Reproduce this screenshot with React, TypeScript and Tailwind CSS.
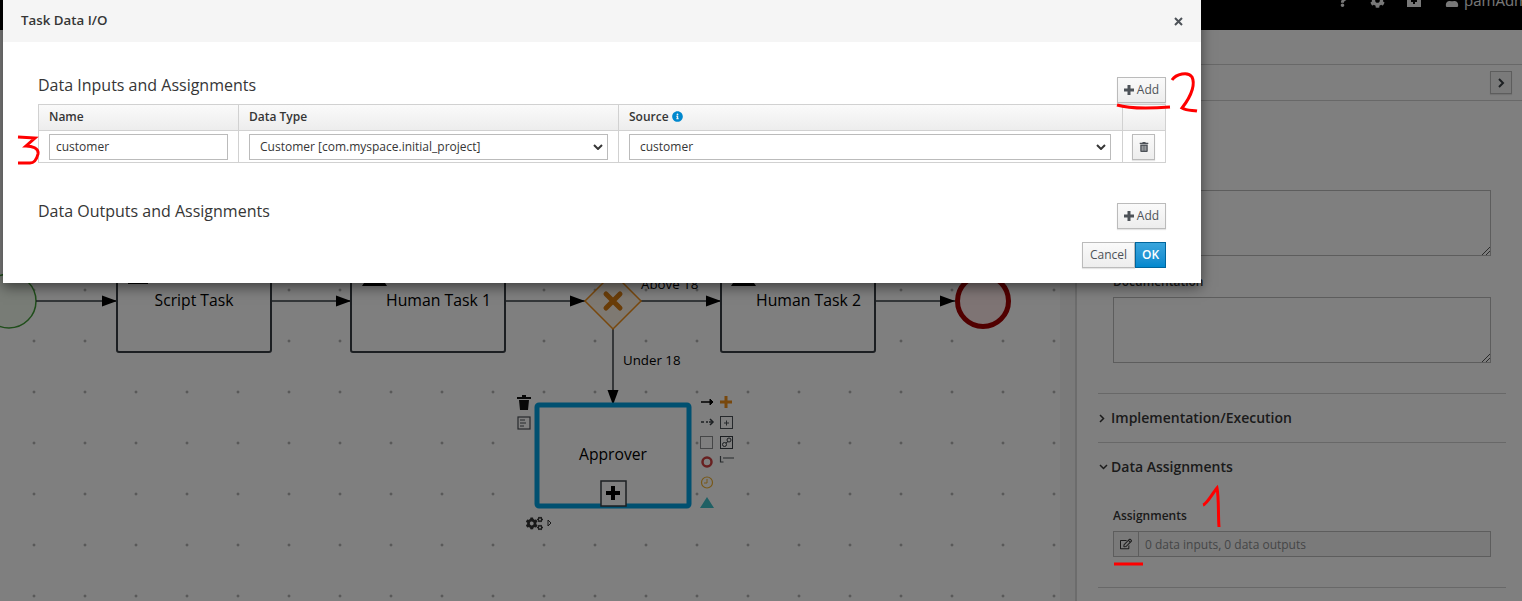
import { FaCog, FaCogs, FaInfoCircle, FaQuestion, FaRegEdit, FaTrashAlt, FaUser } from "react-icons/fa";

const font = "[font-family:'Open_Sans',sans-serif]";

function PlusIcon() {
  return (
    <svg width="10" height="10" viewBox="0 0 10 10" className="fill-[#4d5258]">
      <path d="M3.5 0h3v3.500H10v3H6.500V10h-3V6.500H0v-3h3.500z" />
    </svg>
  );
}

function AddButton() {
  return (
    <button className="flex items-center gap-[3px] h-[26px] w-[49px] justify-center border border-[#bbb] bg-gradient-to-b from-[#fafafa] to-[#ededed] text-xs text-[#4d5258] shadow-[0_1px_1px_rgba(0,0,0,0.1)]">
      <PlusIcon />
      Add
    </button>
  );
}

function Chevron() {
  return (
    <svg width="10" height="6" viewBox="0 0 10 6" className="absolute right-[4px] top-[9px] fill-none stroke-[#363636] stroke-2">
      <path d="M1 1l4 4 4-4" />
    </svg>
  );
}

function SelectBox({ value, width }: { value: string; width: string }) {
  return (
    <div className={`relative h-[26px] ${width} border border-[#bbb] bg-white pl-[10px] text-xs leading-[24px] text-[#363636]`}>
      {value}
      <Chevron />
    </div>
  );
}

function TaskDataModal() {
  return (
    <div className="absolute left-[3px] top-0 w-[1198px] h-[283px] bg-white shadow-[0_4px_12px_rgba(0,0,0,0.5)]">
      <div className="flex h-[42px] items-center justify-between bg-[#f5f5f5] pl-[18px] pr-[18px]">
        <span className="text-[13.3px] font-semibold text-[#363636]">Task Data I/O</span>
        <svg width="9" height="9" viewBox="0 0 9 9" className="stroke-[#4d5258] stroke-2">
          <path d="M1 1l7 7M8 1l-7 7" />
        </svg>
      </div>

      <div className="px-[35px]">
        <div className="flex h-[62px] w-[1128px] items-end justify-between">
          <span className="mb-[8px] text-base leading-[22px] text-[#363636]">Data Inputs and Assignments</span>
          <div className="mb-[1px]"><AddButton /></div>
        </div>

        <div className="w-[1128px] border border-[#d1d1d1] text-xs">
          <div className="flex h-[26px] border-b border-[#d1d1d1] bg-gradient-to-b from-[#fafafa] to-[#ededed] font-semibold text-[#363636]">
            <div className="w-[200px] border-r border-[#d1d1d1] pl-[10px] leading-[23px]">Name</div>
            <div className="w-[380px] border-r border-[#d1d1d1] pl-[10px] leading-[23px]">Data Type</div>
            <div className="flex w-[504px] items-center gap-[3px] border-r border-[#d1d1d1] pb-[2px] pl-[10px]">
              Source
              <FaInfoCircle size={11} className="text-[#0088ce]" />
            </div>
          </div>
          <div className="flex h-[31px]">
            <div className="flex w-[200px] items-center border-r border-[#d1d1d1] pl-[10px]">
              <div className="h-[26px] w-[179px] border border-[#bbb] bg-white pl-[6px] leading-[24px] text-[#363636]">customer</div>
            </div>
            <div className="flex w-[380px] items-center border-r border-[#d1d1d1] pl-[10px]">
              <SelectBox value="Customer [com.myspace.initial_project]" width="w-[359px]" />
            </div>
            <div className="flex w-[504px] items-center border-r border-[#d1d1d1] pl-[10px]">
              <SelectBox value="customer" width="w-[482px]" />
            </div>
            <div className="flex flex-1 items-center pl-[9px]">
              <button className="flex h-[26px] w-[23px] items-center justify-center border border-[#bbb] bg-gradient-to-b from-[#fafafa] to-[#ededed] text-[#4d5258] shadow-[0_1px_1px_rgba(0,0,0,0.1)]">
                <FaTrashAlt size={10} />
              </button>
            </div>
          </div>
        </div>

        <div className="mt-[28px] flex h-[40px] w-[1128px] items-center justify-between">
          <span className="text-base leading-[22px] text-[#363636]">Data Outputs and Assignments</span>
          <div className="mt-[9px]"><AddButton /></div>
        </div>

        <div className="mt-[11px] flex w-[1128px] justify-end">
          <button className="h-[26px] w-[53px] border border-[#bbb] bg-gradient-to-b from-[#fafafa] to-[#ededed] text-xs text-[#4d5258] shadow-[0_1px_1px_rgba(0,0,0,0.1)]">Cancel</button>
          <button className="h-[26px] w-[31px] border border-[#00659c] bg-gradient-to-b from-[#39a5dc] to-[#0088ce] text-xs font-semibold text-white">OK</button>
        </div>
      </div>
    </div>
  );
}

function Arrowhead({ x, y, down }: { x: number; y: number; down?: boolean }) {
  return down ? (
    <polygon points={`${x - 5.5},${y - 15} ${x + 5.5},${y - 15} ${x},${y}`} fill="#000" />
  ) : (
    <polygon points={`${x - 15},${y - 5.5} ${x - 15},${y + 5.5} ${x},${y}`} fill="#000" />
  );
}

function DiagramCanvas() {
  return (
    <div className="absolute inset-0 bg-white bg-[radial-gradient(circle,#8a8a8a_0.9px,transparent_1.4px)] bg-[size:51px_51px] bg-[position:8.5px_9.5px]">
      <svg width="1060" height="601" viewBox="0 0 1060 601" className="absolute left-0 top-0 fill-none">
        <circle cx="9" cy="301" r="27" fill="#f0f8ec" stroke="#3f9c35" strokeWidth="1.5" />
        <path d="M36 301H117M271 301H351M505 301H585M641 301H721M875 301H955" stroke="#393f44" strokeWidth="1.5" />
        <path d="M613 329V404" stroke="#393f44" strokeWidth="1.5" />
        <Arrowhead x={117} y={301} />
        <Arrowhead x={351} y={301} />
        <Arrowhead x={585} y={301} />
        <Arrowhead x={721} y={301} />
        <Arrowhead x={955} y={301} />
        <Arrowhead x={613} y={405} down />

        <rect x="117" y="240" width="154" height="112" rx="2" fill="#fff" stroke="#393f44" strokeWidth="2" />
        <rect x="351" y="240" width="154" height="112" rx="2" fill="#fff" stroke="#393f44" strokeWidth="2" />
        <rect x="721" y="240" width="154" height="112" rx="2" fill="#fff" stroke="#393f44" strokeWidth="2" />
        <path d="M128 284h20v-2h-20zM362 286h25l-4-6h-17zM731 286h25l-4-6h-17z" fill="#000" />

        <path d="M613 273l28 28-28 28-28-28z" fill="#fdf2e5" stroke="#f0901a" strokeWidth="1.5" />
        <path d="M606 294l14 14M620 294l-14 14" stroke="#d47a10" strokeWidth="5" strokeLinecap="round" />

        <circle cx="983" cy="301" r="25.5" fill="#fce8e8" stroke="#a30000" strokeWidth="5" />

        <rect x="537" y="405" width="152" height="101" rx="2" fill="#fff" stroke="#00a0e0" strokeWidth="5" />
        <rect x="601" y="481" width="25" height="25" fill="#fff" stroke="#393f44" strokeWidth="1.5" />
        <path d="M611 486h4v5h5v4h-5v5h-4v-5h-5v-4h5z" fill="#000" />

        <path d="M517 397h14v2h-14zM522 395h4v2h-4zM519 400h10l-1 10h-8z" fill="#111" />
        <rect x="518" y="417" width="12" height="12" fill="#fff" stroke="#4d5258" strokeWidth="1.2" />
        <path d="M520 420h5M520 423h6M520 426h4" stroke="#4d5258" />

        <path d="M701 402h10" stroke="#000" strokeWidth="1.5" />
        <path d="M710 399l3 3-3 3z" fill="#000" stroke="#000" />
        <path d="M720 402h12M726 396v12" stroke="#f0901a" strokeWidth="3" />
        <path d="M701 422h3M706 422h2M709 422h3" stroke="#393f44" strokeWidth="1.5" />
        <path d="M710 419l3 3-3 3" stroke="#393f44" strokeWidth="1.5" />
        <rect x="720.500" y="416.500" width="12" height="12" fill="#fff" stroke="#4d5258" />
        <path d="M724 423h5M726.500 420.500v5" stroke="#4d5258" />
        <rect x="700.500" y="436.500" width="12" height="12" fill="#fff" stroke="#8b8d8f" />
        <rect x="720.500" y="436.500" width="12" height="12" fill="#fff" stroke="#393f44" />
        <circle cx="724.500" cy="444.500" r="2" stroke="#393f44" />
        <circle cx="729" cy="440" r="2" stroke="#393f44" />
        <path d="M726 443l2-1.500" stroke="#393f44" />
        <circle cx="707" cy="462" r="4.500" stroke="#d04040" strokeWidth="2.500" />
        <path d="M720.500 456v6h3M723 458h11" stroke="#4d5258" strokeWidth="1.2" />
        <circle cx="707" cy="482.500" r="5.500" stroke="#f0b030" strokeWidth="1.2" />
        <path d="M707 479v4h-3" stroke="#f0b030" />
        <path d="M707 497l7 11h-14z" fill="#3ec0c8" />
        <path d="M548 520l3 3-3 3z" stroke="#333" />
      </svg>
      <FaCogs size={17} className="absolute left-[526px] top-[515px] text-[#333]" />
      <span className="absolute left-[117px] top-[289px] w-[154px] text-center text-[15.7px] leading-[22px] text-black">Script Task</span>
      <span className="absolute left-[386px] top-[289px] text-[15.8px] leading-[22px] text-black">Human Task 1</span>
      <span className="absolute left-[756px] top-[289px] text-[15.8px] leading-[22px] text-black">Human Task 2</span>
      <span className="absolute left-[641px] top-[275px] text-[13.3px] leading-[18px] text-black">Above 18</span>
      <span className="absolute left-[623px] top-[351px] text-[13.3px] leading-[18px] text-black">Under 18</span>
      <span className="absolute left-[537px] top-[443px] w-[152px] text-center text-[15.7px] leading-[22px] text-black">Approver</span>
    </div>
  );
}

function ResizableBox() {
  return (
    <div className="relative ml-[15px] h-[66px] w-[378px] border border-[#bbb] bg-white">
      <svg width="8" height="8" viewBox="0 0 8 8" className="absolute bottom-0 right-0 stroke-[#555]">
        <path d="M0 8L8 0M4 8L8 4" />
      </svg>
    </div>
  );
}

function PropertiesPanel() {
  return (
    <aside className="flex w-[447px] shrink-0 flex-col border-l-[2px] border-[#d8d8d8] bg-white">
      <div className="h-[35px] border-b border-[#d1d1d1]" />
      <div className="flex h-[36px] items-center justify-end border-b border-[#d1d1d1] pr-[10px]">
        <div className="flex h-[23px] w-[22px] items-center justify-center border border-[#bbb] bg-[#f5f5f5] shadow-[0_1px_1px_rgba(0,0,0,0.1)]">
          <svg width="7" height="10" viewBox="0 0 7 10" className="fill-none stroke-[#393f44] stroke-2"><path d="M1 1l4 4-4 4" /></svg>
        </div>
      </div>

      <div className="flex-1 pl-[21px] pr-[16px]">
        <div className="mt-[89px]"><ResizableBox /></div>
        <div className="ml-[15px] mt-[17px] text-xs font-semibold leading-[18px] text-[#363636]">Documentation</div>
        <div className="mt-[6px]"><ResizableBox /></div>

        <div className="mt-[30px] flex h-[50px] items-center gap-[6px] border-y border-[#d1d1d1] pl-[1px]">
          <svg width="6" height="9" viewBox="0 0 6 9" className="fill-none stroke-[#363636] stroke-[1.5]"><path d="M1 1l3.500 3.500L1 8" /></svg>
          <span className="text-sm font-semibold text-[#363636]">Implementation/Execution</span>
        </div>

        <div className="flex h-[49px] items-center gap-[3px] pb-[2px] pl-[1px]">
          <svg width="9" height="6" viewBox="0 0 9 6" className="fill-none stroke-[#363636] stroke-[1.5]"><path d="M1 1l3.500 3.500L8 1" /></svg>
          <span className="text-sm font-semibold text-[#363636]">Data Assignments</span>
        </div>

        <div className="ml-[15px] mt-[15px] text-xs font-semibold leading-[18px] text-[#363636]">Assignments</div>
        <div className="ml-[15px] mt-[6px] flex h-[26px] w-[378px] border border-[#bbb] bg-[#f5f5f5]">
          <div className="flex w-[25px] items-center justify-center border-r border-[#bbb] text-[#363636]">
            <FaRegEdit size={12} />
          </div>
          <span className="pl-[6px] text-xs leading-[25px] text-[#8b8d8f]">0 data inputs, 0 data outputs</span>
        </div>
        <div className="mt-[30px] border-t border-[#d1d1d1]" />
      </div>
    </aside>
  );
}

function TopBar() {
  return (
    <header className="flex h-[30px] shrink-0 items-start justify-end overflow-hidden bg-black">
      <div className="-mt-[11px] flex items-center text-[15px] text-[#f0f0f0]">
        <FaQuestion size={13} className="mr-[21px]" />
        <FaCog size={15} className="mr-[22px]" />
        <svg width="14" height="14" viewBox="0 0 14 14" className="mr-[24px] fill-[#f0f0f0]"><path d="M0 0h14v14H0zm6 5v2H4v2h2v2h2V9h2V7H8V5z" fillRule="evenodd" /></svg>
        <FaUser size={14} className="mr-[5px]" />
        <span className="w-[58px] overflow-hidden whitespace-nowrap">pamAdmin</span>
      </div>
    </header>
  );
}

function RedMarks() {
  return (
    <svg width="1522" height="601" viewBox="0 0 1522 601" className="pointer-events-none absolute left-0 top-0 fill-none stroke-[#f00] stroke-[3px]">
      <path d="M18 137l17 1-9 8c6 0 13 2 12 8-1 4-3 9-8 9H18" />
      <path d="M1117 105c10 3 26 4 53 2" />
      <path d="M1172 80c4-6 16-9 20-3 3 6 1 17-10 31 5 3 10 2 15 3" />
      <path d="M1114 564h29" />
      <path d="M1203 505c4-1 9-11 14-17 2 10 1 26 2 39" />
    </svg>
  );
}

export default function App() {
  return (
    <div className={`relative h-[601px] w-[1522px] overflow-hidden bg-white ${font}`}>
      <div className="flex h-full flex-col">
        <TopBar />
        <div className="flex flex-1">
          <main className="relative flex-1 overflow-hidden bg-white">
            <div className="absolute inset-x-0 -top-[30px] bottom-0"><DiagramCanvas /></div>
          </main>
          <div className="w-[15px] shrink-0 bg-[#f5f5f5]" />
          <PropertiesPanel />
        </div>
      </div>
      <div className="absolute inset-0 bg-[#00000080]" />
      <TaskDataModal />
      <RedMarks />
    </div>
  );
}
